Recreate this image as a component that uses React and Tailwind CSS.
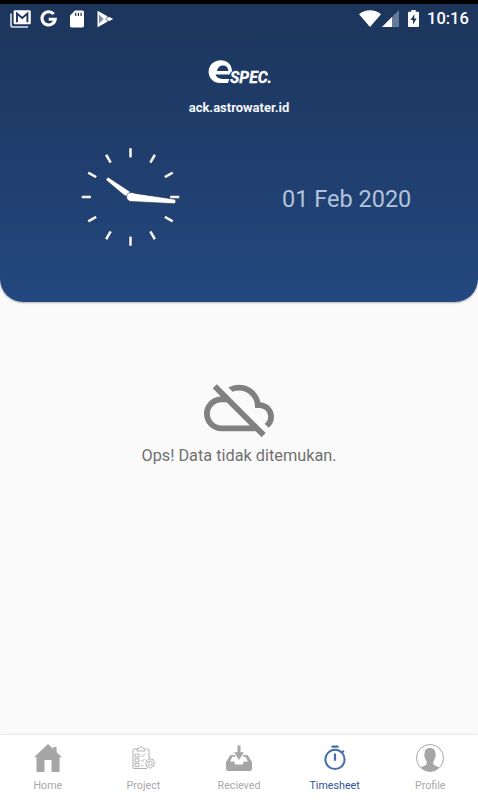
import React from "react";

const ticks = [0, 30, 60, 90, 120, 150, 180, 210, 240, 270, 300, 330];

function StatusBar() {
  return (
    <div className="flex h-[29px] items-center justify-between pl-[10px] pr-[10px] text-white">
      <div className="flex items-center">
        <svg className="mr-[9px] h-[18px] w-[21px]" viewBox="0 0 21 18" fill="none">
          <path d="M1 3.5V15.5Q1 17 2.5 17H18" stroke="#dfe5ef" strokeWidth="1.6" />
          <rect x="3.6" y="0.3" width="17.2" height="14" rx="1.4" fill="#fff" />
          <path d="M7 12.2V3.6L12.2 8L17.4 3.6V12.2" stroke="#1d365d" strokeWidth="1.9" />
        </svg>
        <svg className="mr-[13px] h-[18px] w-[17px]" viewBox="0 0 17 18" fill="none">
          <path d="M13.7 4.1A6.6 6.6 0 1 0 15.2 9.2H8.7" stroke="#fff" strokeWidth="3.1" />
        </svg>
        <svg className="mr-[13px] h-[18px] w-[14px]" viewBox="0 0 14 18">
          <path d="M5 .5H12.4Q14 .5 14 2V15.8Q14 17.5 12.4 17.5H1.6Q0 17.5 0 15.8V5.6Z" fill="#fff" />
          <path d="M5.7 2.7V6M8.4 2.7V6M11.1 2.7V6" stroke="#1d365d" strokeWidth="1.2" />
        </svg>
        <svg className="h-[18px] w-[17px]" viewBox="0 0 17 18">
          <path d="M.5 .8L10 6L12.2 9L10 12L.5 17.2Z" fill="#fff" />
          <path d="M2 4.5L6.6 9L2 13.5Z" fill="#7d8eac" />
          <path d="M12 6.7L16.2 9L12 11.3L10.3 9Z" fill="#fff" />
          <path d="M8.6 9L11.2 6.4M8.6 9L11.2 11.6" stroke="#3f5780" strokeWidth=".8" />
        </svg>
      </div>
      <div className="flex items-center">
        <svg className="mr-px h-[17px] w-[22px]" viewBox="0 0 22 17">
          <path d="M0 4.2C6 -1.2 16 -1.2 22 4.2L11 17Z" fill="#fff" />
        </svg>
        <svg className="mr-[9px] h-[17px] w-[17px]" viewBox="0 0 17 17">
          <path d="M17 0V17H0Z" fill="#667a9a" />
          <path d="M10 7V17H0Z" fill="#fff" />
        </svg>
        <svg className="mr-[8px] h-[17px] w-[11px]" viewBox="0 0 11 17">
          <path d="M3.3 0H7.7V1.8H10Q11 1.8 11 2.8V16Q11 17 10 17H1Q0 17 0 16V2.8Q0 1.8 1 1.8H3.3Z" fill="#fff" />
          <path d="M6.5 4L2.4 10H5V14.5L8.7 8.6H6.2Z" fill="#1d365d" />
        </svg>
        <span className="w-[41px] whitespace-nowrap pt-[2px] text-[16.5px] font-medium leading-none">10:16</span>
      </div>
    </div>
  );
}

function Logo() {
  return (
    <svg className="h-[26px] w-[64px] overflow-visible" viewBox="0 0 64 26" fill="none">
      <path d="M25 13.2C25 6.5 20 2.2 13.8 2.2C6.8 2.2 1.6 7.3 1.6 13.8C1.6 20.3 6.6 25.1 13.2 25.1H21L22.2 21H15.5C11.3 21 9 18.8 8.6 16.6H22.6Q23.2 14.2 25 13.2ZM10 13C10.6 9.8 13 7.6 16 7.6C19.3 7.6 21.2 9.8 21.4 13Z" fill="#fff" fillRule="evenodd" />
      <text x="23" y="24.8" textLength="42" lengthAdjust="spacingAndGlyphs" fill="#fff" stroke="#fff" strokeWidth=".3" className="font-['Roboto',sans-serif] text-[16.5px] font-bold italic">SPEC.</text>
    </svg>
  );
}

function Clock() {
  return (
    <svg className="h-[102px] w-[102px]" viewBox="-50.5 -51 102 102">
      {ticks.map((a) => (
        <g key={a} transform={`rotate(${a})`}>
          <rect x="-1.9" y="-49.3" width="3.8" height="10.4" rx="1" fill="#132c50" opacity=".5" />
          <rect x="-1.3" y="-48.8" width="2.6" height="9.2" fill="#f4f3ef" />
        </g>
      ))}
      <g fill="#fff" stroke="#172b48" strokeWidth=".6" strokeLinejoin="round">
        <path d="M-24.3 -16.8Q-24.8 -19.6 -21.8 -19.4L-.2 -5.2L-1.8 .8L-7 -2.3Z" />
        <path d="M-1.8 -4.2Q1 -5.1 5 -3.6L44.5 2.3Q46.5 4.8 44 6.7L-.5 4.4Q-3.8 3.4 -4 .3Q-4 -2.9 -1.8 -4.2Z" />
      </g>
    </svg>
  );
}

function HomeIcon() {
  return (
    <svg className="h-7 w-7" viewBox="0 0 28 28" fill="#a6a6a6">
      <path d="M14 0L19.2 5V3H22.6V8.2L28 13.3H25.6V28H17.5V16H10.5V28H2.5V13.3H0Z" />
    </svg>
  );
}

function ProjectIcon() {
  return (
    <svg className="h-7 w-7" viewBox="0 0 28 28" fill="none" stroke="#aaa" strokeWidth=".9">
      <path d="M9 5H5Q4 5 4 6V23.5Q4 24.5 5 24.5H18M17 5H19Q20 5 20 6V14M8 7V5.2Q8 4.5 9 4.5H10Q10.5 2.7 12 2.7T14 4.5H15.3Q16 4.5 16 5.2V7Z" />
      <path d="M6 10H10V13H6ZM6 14.8H10V17.8H6ZM6 19.5H10V22.5H6ZM12 11.5L13.2 12.7L16 9.7M12 16.3L13.2 17.5L15.5 15M12 21L13.2 22.2L14.5 21" />
      <path d="M20 15.7L21 13.9L22.3 15.8L24.2 15.2L24.3 17.4L26 18.5L24.6 20L25 22L22.9 22.5L21.5 24.5L20 22.8L17.7 23L17.8 20.8L16 19.5L17.7 18L17.5 16.2Z" />
      <circle cx="21.1" cy="19.2" r="2.1" />
    </svg>
  );
}

function ReceivedIcon() {
  return (
    <svg className="h-7 w-7" viewBox="0 0 28 28" fill="#a6a6a6">
      <path d="M12.5 1.5H15.5V8.2H19L14 16L9 8.2H12.5Z" />
      <path d="M6.2 11H9.7L10.5 12.7H7.4L5 17.5H9L10.3 20.5H17.7L19 17.5H23L20.6 12.7H17.5L18.3 11H21.8Q22.8 11 23.4 12.2L27 18V24.5Q27 27 24.5 27H3.5Q1 27 1 24.5V18L4.6 12.2Q5.2 11 6.2 11Z" />
    </svg>
  );
}

function TimerIcon() {
  return (
    <svg className="h-7 w-7" viewBox="0 0 28 28" fill="none" stroke="#456da9">
      <circle cx="14" cy="15.4" r="9.6" strokeWidth="2" />
      <path d="M10.5 2.6H17.5M14 9.5V16.8M20.5 9L22.8 6.8" strokeWidth="2.2" />
    </svg>
  );
}

function ProfileIcon() {
  return (
    <svg className="h-7 w-7" viewBox="0 0 28 28">
      <circle cx="14" cy="14" r="13.5" fill="#fff" stroke="#a6a6a6" />
      <path d="M14 4C17.8 4 19.6 6.3 19.4 10Q20.3 11 19 14Q18.3 16.5 17.3 17.5V20Q18 21.5 23 23Q19.5 27.3 14 27.3T5 23Q10 21.5 10.7 20V17.5Q9.7 16.5 9 14Q7.7 11 8.6 10C8.4 6.3 10.2 4 14 4Z" fill="#a6a6a6" />
    </svg>
  );
}

const tabs = [
  { label: "Home", Icon: HomeIcon },
  { label: "Project", Icon: ProjectIcon },
  { label: "Recieved", Icon: ReceivedIcon },
  { label: "Timesheet", Icon: TimerIcon, active: true },
  { label: "Profile", Icon: ProfileIcon },
];

export default function App() {
  return (
    <div className="flex h-[800px] w-[478px] flex-col overflow-hidden bg-[#fafafa] font-['Roboto',sans-serif]">
      <div className="h-1 shrink-0 bg-black" />
      <header className="flex h-[298px] shrink-0 flex-col rounded-b-[23px] bg-linear-to-b from-[#1c355b] to-[#23477f] shadow-[0_1px_2px_rgba(0,0,0,0.3)]">
        <StatusBar />
        <div className="mt-[25px] flex flex-col items-center">
          <Logo />
          <p className="mt-[16px] text-[13px] font-bold leading-4 text-[#f5f7fa]">ack.astrowater.id</p>
        </div>
        <div className="mt-[30px] flex items-center pl-[80px]">
          <Clock />
          <p className="ml-[100px] whitespace-nowrap pt-[3px] text-[23.5px] leading-7 text-[#b4c3dc]">01 Feb 2020</p>
        </div>
      </header>
      <main className="flex flex-1 flex-col items-center pt-[71px] text-[#707070]">
        <svg className="h-[70px] w-[70px]" viewBox="0 0 24 24" fill="#808080">
          <path d="M24 15c0-2.64-2.05-4.78-4.65-4.96C18.67 6.59 15.64 4 12 4c-1.33 0-2.57.36-3.65.97l1.49 1.49C10.51 6.17 11.23 6 12 6c3.04 0 5.5 2.46 5.5 5.5v.5H19c1.66 0 3 1.34 3 3 0 .99-.48 1.85-1.21 2.4l1.41 1.41c1.09-.92 1.8-2.27 1.8-3.81zM4.41 3.86L3 5.27l2.77 2.77h-.42C2.34 8.36 0 10.91 0 14c0 3.31 2.69 6 6 6h11.73l2 2 1.41-1.41L4.41 3.86zM6 18c-2.21 0-4-1.79-4-4s1.79-4 4-4h1.73l8 8H6z" />
        </svg>
        <p className="mt-[3px] text-[16.3px] leading-5">Ops! Data tidak ditemukan.</p>
      </main>
      <nav className="grid h-[65px] shrink-0 grid-cols-5 bg-white shadow-[0_-1px_2px_rgba(0,0,0,0.08)]">
        {tabs.map(({ label, Icon, active }) => (
          <div key={label} className={active ? "flex flex-col items-center pt-[9px] text-[#2c549b]" : "flex flex-col items-center pt-[9px] text-[#a9a9a9]"}>
            <Icon />
            <span className="mt-[7px] text-[10.7px] leading-[14px]">{label}</span>
          </div>
        ))}
      </nav>
    </div>
  );
}
